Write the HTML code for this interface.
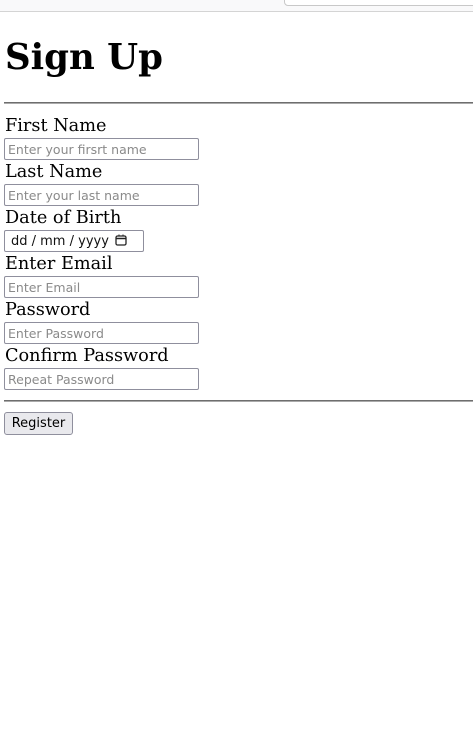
<!DOCTYPE html>
<html><head><style>
html,body{margin:0;padding:0;background:#fff;width:473px;height:731px;overflow:hidden;position:relative}
*{box-sizing:border-box}
.bar{position:absolute;left:0;top:0;width:473px;height:12px;background:#f9f9fa;border-bottom:1px solid #d4d4d4}
.search{position:absolute;left:284px;top:-6px;width:200px;height:12px;border:1px solid #c8c8c8;border-radius:4px;background:#fff}
h1{position:absolute;left:5px;top:38px;margin:0;font:bold 35.5px "DejaVu Serif","Liberation Serif",serif;color:#000;line-height:40px}
.hr{position:absolute;left:4px;width:469px;height:2px;background:#6e6e6e;border-bottom:1px solid #aaa}
.lab{position:absolute;left:5px;font:17.7px "DejaVu Serif","Liberation Serif",serif;color:#000;line-height:20px}
.in{position:absolute;left:4px;width:195px;height:22px;border:1px solid #8f8f9d;border-radius:2px;font:12.5px "DejaVu Sans","Liberation Sans",sans-serif;color:#8a8a8a;padding:3px 0 0 3px;white-space:nowrap;overflow:hidden}
.date{width:140px;color:#111;padding-left:6px;font-size:13px}
.btn{position:absolute;left:4px;top:412px;width:69px;height:23px;border:1px solid #8f8f9d;border-radius:3px;background:#e9e9ed;font:13px "DejaVu Sans","Liberation Sans",sans-serif;color:#000;text-align:center;line-height:21px}
</style></head><body>
<div class="bar"></div><div class="search"></div>
<h1>Sign Up</h1>
<div class="hr" style="top:102px"></div>
<div class="lab" style="top:116px">First Name</div>
<div class="in" style="top:138px">Enter your firsrt name</div>
<div class="lab" style="top:162px">Last Name</div>
<div class="in" style="top:184px">Enter your last name</div>
<div class="lab" style="top:208px">Date of Birth</div>
<div class="in date" style="top:230px">dd / mm / yyyy <svg width="12" height="12" viewBox="0 0 12 12" style="vertical-align:-1px;margin-left:2px"><rect x="1" y="2" width="10" height="9" rx="1.5" fill="none" stroke="#222" stroke-width="1.3"/><line x1="1" y1="4.5" x2="11" y2="4.5" stroke="#222" stroke-width="1.5"/><line x1="4" y1="0.5" x2="4" y2="2.5" stroke="#222"/><line x1="8" y1="0.5" x2="8" y2="2.5" stroke="#222"/></svg></div>
<div class="lab" style="top:254px">Enter Email</div>
<div class="in" style="top:276px">Enter Email</div>
<div class="lab" style="top:300px">Password</div>
<div class="in" style="top:322px">Enter Password</div>
<div class="lab" style="top:346px">Confirm Password</div>
<div class="in" style="top:368px">Repeat Password</div>
<div class="hr" style="top:400px"></div>
<div class="btn">Register</div>
</body></html>
